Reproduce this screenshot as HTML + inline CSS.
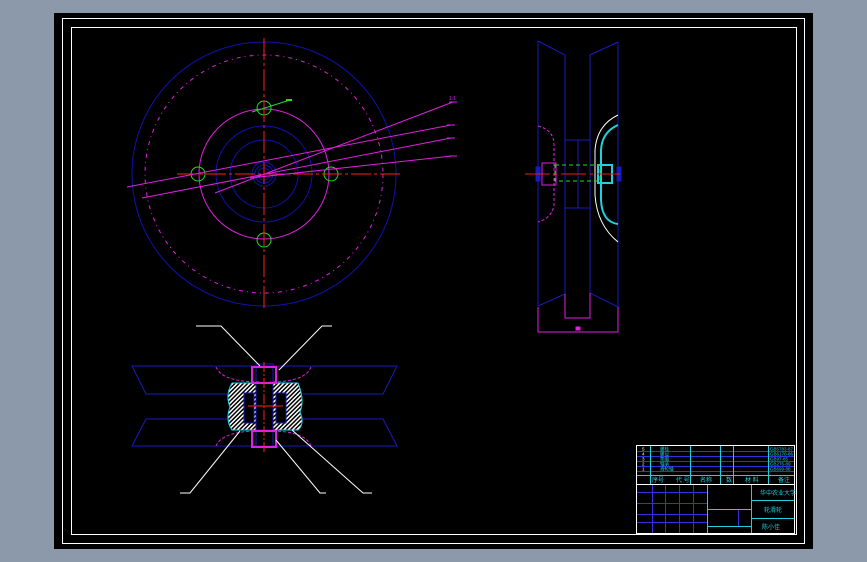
<!DOCTYPE html>
<html><head><style>
html,body{margin:0;padding:0;}
body{width:867px;height:562px;background:#8b99aa;overflow:hidden;position:relative;font-family:"Liberation Sans","Noto Sans CJK SC",sans-serif;}
svg{position:absolute;left:0;top:0;}
</style></head><body>
<svg width="867" height="562" viewBox="0 0 867 562" xmlns="http://www.w3.org/2000/svg" shape-rendering="crispEdges">
<defs>
<pattern id="h" width="3" height="3" patternUnits="userSpaceOnUse" patternTransform="rotate(45)">
<rect width="3" height="3" fill="#000"/><rect width="1.5" height="3" fill="#fff"/>
</pattern>
</defs>
<rect x="54" y="13" width="759" height="536" fill="#000"/>
<rect x="62.5" y="18.5" width="742" height="525" fill="none" stroke="#fff" stroke-width="1"/>
<rect x="71.5" y="27.5" width="725" height="507" fill="none" stroke="#fff" stroke-width="1"/>
<g shape-rendering="auto" fill="none">
<circle cx="264" cy="174" r="132" stroke="#1010b0" stroke-width="1"/>
<circle cx="264" cy="174" r="119" stroke="#e020e0" stroke-dasharray="4,4,1,4"/>
<circle cx="264" cy="174" r="65" stroke="#e020e0"/>
<circle cx="264" cy="174" r="48" stroke="#1010b0"/>
<circle cx="264" cy="174" r="34" stroke="#1010b0"/>
<circle cx="264" cy="174" r="12" stroke="#1010b0"/>
<circle cx="264" cy="174" r="9" stroke="#1010b0"/>
<circle cx="264" cy="174" r="6" stroke="#1010b0"/>
<circle cx="264" cy="108" r="7" stroke="#20e020"/>
<circle cx="264" cy="240" r="7" stroke="#20e020"/>
<circle cx="198" cy="174" r="7" stroke="#20e020"/>
<circle cx="331" cy="174" r="7" stroke="#20e020"/>
<line x1="177" y1="174" x2="403" y2="174" stroke="#ff2020" stroke-dasharray="20,3,3,3"/>
<line x1="264" y1="38" x2="264" y2="310" stroke="#ff2020" stroke-dasharray="22,3,3,3"/>
<g stroke="#e020e0">
<line x1="453" y1="102" x2="215" y2="193"/>
<line x1="451" y1="125" x2="127" y2="187"/>
<line x1="451" y1="138" x2="142" y2="198"/>
<line x1="452" y1="156" x2="250" y2="178"/>
<line x1="449" y1="102" x2="457" y2="102"/><line x1="447" y1="125" x2="455" y2="125"/>
<line x1="447" y1="138" x2="455" y2="138"/><line x1="449" y1="156" x2="457" y2="156"/>
</g>
<line x1="252" y1="112" x2="290" y2="100" stroke="#20e020"/>
<line x1="286" y1="100" x2="292" y2="100" stroke="#20e020" stroke-width="2"/>
<g stroke="#1a1ac0">
<polyline points="538,41 565,55 565,294 538,306 538,41"/>
<polyline points="618,42 590,55 590,293 618,307 618,42"/>
<rect x="565" y="140" width="25" height="68"/>
<line x1="578" y1="140" x2="578" y2="208"/>
<rect x="536" y="167" width="4" height="14" fill="#1a1ac0"/>
<rect x="617" y="167" width="4" height="14" fill="#1a1ac0"/>
</g>
<path d="M538,126 Q554,130 554,145 L554,205 Q552,218 538,222" stroke="#e020e0" stroke-dasharray="3,2"/>
<path d="M618,115 Q597,125 595,150 L595,195 Q597,225 618,242" stroke="#fff"/>
<path d="M618,125 Q602,132 601,150 L601,200 Q602,222 618,224" stroke="#20d0e0" stroke-width="2"/>
<rect x="542" y="163" width="14" height="22" stroke="#e020e0"/>
<rect x="598" y="165" width="14" height="18" stroke="#20d0e0" stroke-width="2"/>
<rect x="555" y="165" width="45" height="16" stroke="#20e020" stroke-dasharray="4,3"/>
<line x1="525" y1="174" x2="620" y2="174" stroke="#e02020" stroke-dasharray="25,4,3,4"/>
<g stroke="#e020e0">
<polyline points="538,307 538,332 618,332 618,307"/>
<polyline points="565,294 565,318 590,318 590,293"/>
<rect x="576" y="327" width="4" height="3" fill="#e020e0"/>
</g>
<g stroke="#1a1ac0">
<polygon points="132,366 397,366 383,394 146,394"/>
<polygon points="146,419 383,419 397,446 132,446"/>
<rect x="256" y="364" width="17" height="83"/>
</g>
<path d="M232,383 L298,383 Q305,400 300,412 Q305,424 298,430 L232,430 Q225,420 230,407 Q225,395 232,383Z" fill="url(#h)" stroke="#20d0e0"/>
<rect x="244" y="393" width="10" height="30" fill="#000" stroke="#1a1ac0"/>
<rect x="276" y="393" width="10" height="30" fill="#000" stroke="#1a1ac0"/>
<rect x="256" y="383" width="17" height="47" fill="#000" stroke="#1a1ac0"/>
<rect x="252" y="367" width="24" height="16" stroke="#e020e0" stroke-width="2"/>
<rect x="252" y="431" width="24" height="16" stroke="#e020e0" stroke-width="2"/>
<path d="M216,367 Q222,382 260,382 M311,367 Q305,382 270,382 M216,446 Q222,431 260,431 M311,446 Q305,431 270,431" stroke="#e020e0" stroke-dasharray="3,2"/>
<line x1="264" y1="362" x2="264" y2="452" stroke="#ff2020" stroke-dasharray="10,2,2,2"/>
<line x1="248" y1="406" x2="283" y2="406" stroke="#ff2020"/>
<g stroke="#fff">
<polyline points="196,326 221,326 260,366"/>
<polyline points="332,326 322,326 279,370"/>
<polyline points="180,493 190,493 240,431"/>
<polyline points="326,493 320,493 276,440"/>
<polyline points="372,493 363,493 292,430"/>
</g>
</g>
<g fill="none" stroke-width="1">
<rect x="636.5" y="445.5" width="158" height="88" stroke="#fff"/>
<g stroke="#3030e0">
<line x1="637" y1="451.5" x2="794" y2="451.5"/><line x1="637" y1="456.5" x2="794" y2="456.5"/>
<line x1="637" y1="461.5" x2="794" y2="461.5"/><line x1="637" y1="466.5" x2="794" y2="466.5"/>
<line x1="637" y1="471.5" x2="794" y2="471.5"/>
<line x1="637" y1="492.5" x2="707" y2="492.5"/><line x1="637" y1="503.5" x2="707" y2="503.5"/>
<line x1="637" y1="514.5" x2="707" y2="514.5"/><line x1="637" y1="522.5" x2="707" y2="522.5"/>
<line x1="652.5" y1="485" x2="652.5" y2="533"/><line x1="665.5" y1="485" x2="665.5" y2="533"/>
<line x1="679.5" y1="485" x2="679.5" y2="533"/><line x1="693.5" y1="485" x2="693.5" y2="533"/>
<line x1="738.5" y1="509" x2="738.5" y2="526"/>
</g>
<g stroke="#20d0e0">
<line x1="650.5" y1="446" x2="650.5" y2="484"/><line x1="690.5" y1="446" x2="690.5" y2="484"/>
<line x1="720.5" y1="446" x2="720.5" y2="484"/><line x1="733.5" y1="446" x2="733.5" y2="484"/>
<line x1="768.5" y1="446" x2="768.5" y2="484"/>
<line x1="637" y1="475.5" x2="794" y2="475.5"/>
<line x1="707.5" y1="485" x2="707.5" y2="533"/><line x1="751.5" y1="485" x2="751.5" y2="533"/>
<line x1="751" y1="500.5" x2="794" y2="500.5"/><line x1="751" y1="518.5" x2="794" y2="518.5"/>
<line x1="707" y1="509.5" x2="751" y2="509.5"/><line x1="707" y1="526.5" x2="751" y2="526.5"/>
</g>
<line x1="637" y1="484.5" x2="794" y2="484.5" stroke="#fff"/>
</g>
<g font-size="6" fill="#20d0e0" font-family="Liberation Sans, Noto Sans CJK SC, sans-serif">
<text x="652" y="482">序号</text><text x="676" y="482">代 号</text><text x="700" y="482">名称</text>
<text x="726" y="482">数</text><text x="745" y="482">材 料</text><text x="778" y="482">备注</text>
<text x="760" y="495">华中农业大学</text><text x="764" y="512">轮滑轮</text><text x="762" y="529">陈小佳</text>
</g>
<g font-size="4.5" fill="#20d0e0" font-family="Liberation Sans, Noto Sans CJK SC, sans-serif">
<text x="660" y="450.5">螺栓</text><text x="660" y="455.5">螺母</text><text x="660" y="460.5">垫圈</text><text x="660" y="465.5">轴承</text><text x="660" y="470.5">滑轮轴</text>
<text x="770" y="450.5">GB5783-87</text><text x="770" y="455.5">GB6170-86</text><text x="770" y="460.5">GB97-85</text><text x="770" y="465.5">GB276-89</text><text x="770" y="470.5">GB699-88</text>
</g>
<g font-size="4.5" fill="#fff"><text x="642" y="450.5">5</text><text x="642" y="455.5">4</text><text x="642" y="460.5">3</text><text x="642" y="465.5">2</text><text x="642" y="470.5">1</text></g>
<g font-size="5" fill="#e020e0"><text x="449" y="100">1:1</text></g>
</svg>
</body></html>
